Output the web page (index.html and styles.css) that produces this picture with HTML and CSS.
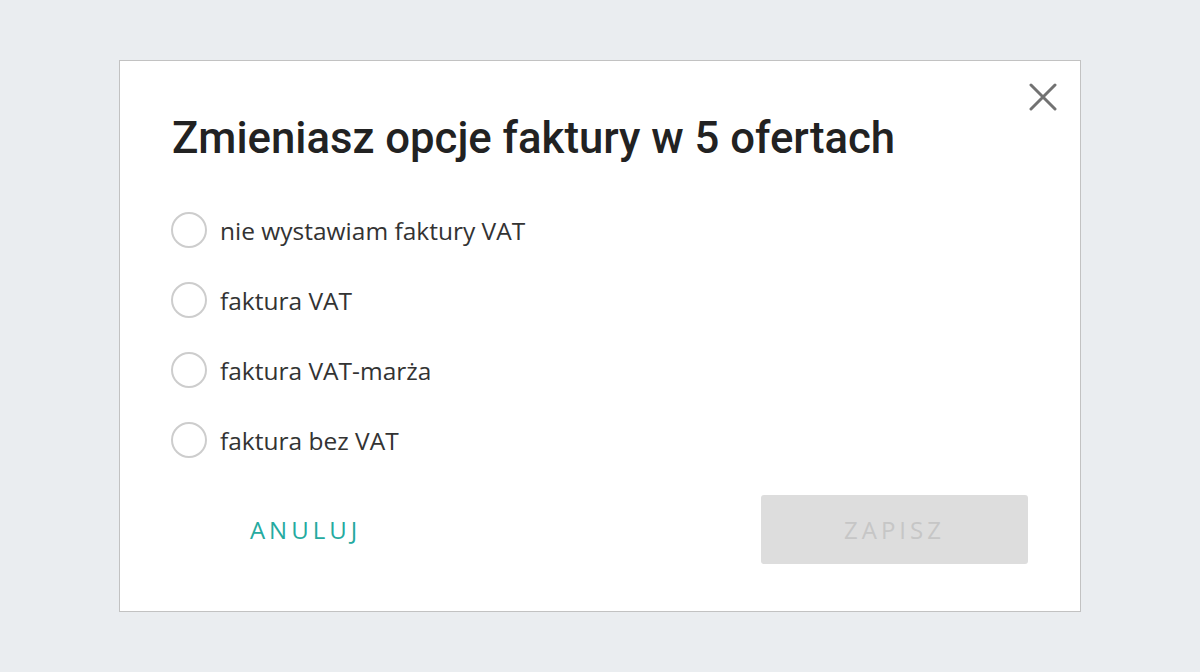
FILE: index.html
```html
<!DOCTYPE html>
<html lang="pl">
<head>
<meta charset="utf-8">
<link rel="stylesheet" href="styles.css">
</head>
<body>
<div class="page">
  <div class="modal">
    <button class="close" aria-label="Zamknij">
      <svg width="28" height="28" viewBox="0 0 28 28"><path d="M2 2L26 26M26 2L2 26" stroke="#727272" stroke-width="3" stroke-linecap="round"/></svg>
    </button>
    <h1 class="title">Zmieniasz opcje faktury w 5 ofertach</h1>
    <ul class="options">
      <li class="option"><span class="radio"></span><span class="label">nie wystawiam faktury VAT</span></li>
      <li class="option"><span class="radio"></span><span class="label">faktura VAT</span></li>
      <li class="option"><span class="radio"></span><span class="label">faktura VAT-marża</span></li>
      <li class="option"><span class="radio"></span><span class="label">faktura bez VAT</span></li>
    </ul>
    <div class="actions">
      <button class="btn btn-cancel">ANULUJ</button>
      <button class="btn btn-save">ZAPISZ</button>
    </div>
  </div>
</div>
</body>
</html>
```
FILE: styles.css
```css
html, body {
  margin: 0;
  padding: 0;
}
body {
  background: #eaedf0;
  width: 1200px;
  height: 672px;
  overflow: hidden;
}
.page {
  padding-top: 60px;
  display: flex;
  justify-content: center;
}
.modal {
  position: relative;
  box-sizing: border-box;
  width: 962px;
  height: 552px;
  background: #ffffff;
  border: 1px solid #c2c2c2;
  padding: 51px 52px 0 52px;
}
.close {
  position: absolute;
  top: 20px;
  right: 21px;
  width: 32px;
  height: 32px;
  padding: 0;
  border: 0;
  background: transparent;
  display: flex;
  align-items: center;
  justify-content: center;
}
.title {
  margin: 0;
  font-family: Roboto, "Liberation Sans", sans-serif;
  font-weight: 500;
  font-size: 43.7px;
  line-height: 52px;
  color: #222222;
}
.options {
  list-style: none;
  margin: 48px 0 0 0;
  padding: 0;
  display: flex;
  flex-direction: column;
  gap: 34px;
}
.option {
  display: flex;
  align-items: center;
  height: 36px;
}
.radio {
  box-sizing: border-box;
  width: 36px;
  height: 36px;
  margin-left: -1px;
  border: 2px solid #cdcdcd;
  border-radius: 50%;
  flex: none;
}
.label {
  margin-left: 13px;
  font-family: "Open Sans", "Liberation Sans", sans-serif;
  font-size: 24.5px;
  color: #333333;
}
.actions {
  margin-top: 37px;
  display: flex;
  justify-content: space-between;
}
.btn {
  width: 267px;
  height: 69px;
  border: 0;
  border-radius: 3px;
  font-family: "Open Sans", "Liberation Sans", sans-serif;
  font-size: 24px;
  letter-spacing: 4px;
  padding: 0;
}
.btn-cancel {
  background: transparent;
  color: #25aaa0;
}
.btn-save {
  background: #dddddd;
  color: #c6c6c6;
}
```
